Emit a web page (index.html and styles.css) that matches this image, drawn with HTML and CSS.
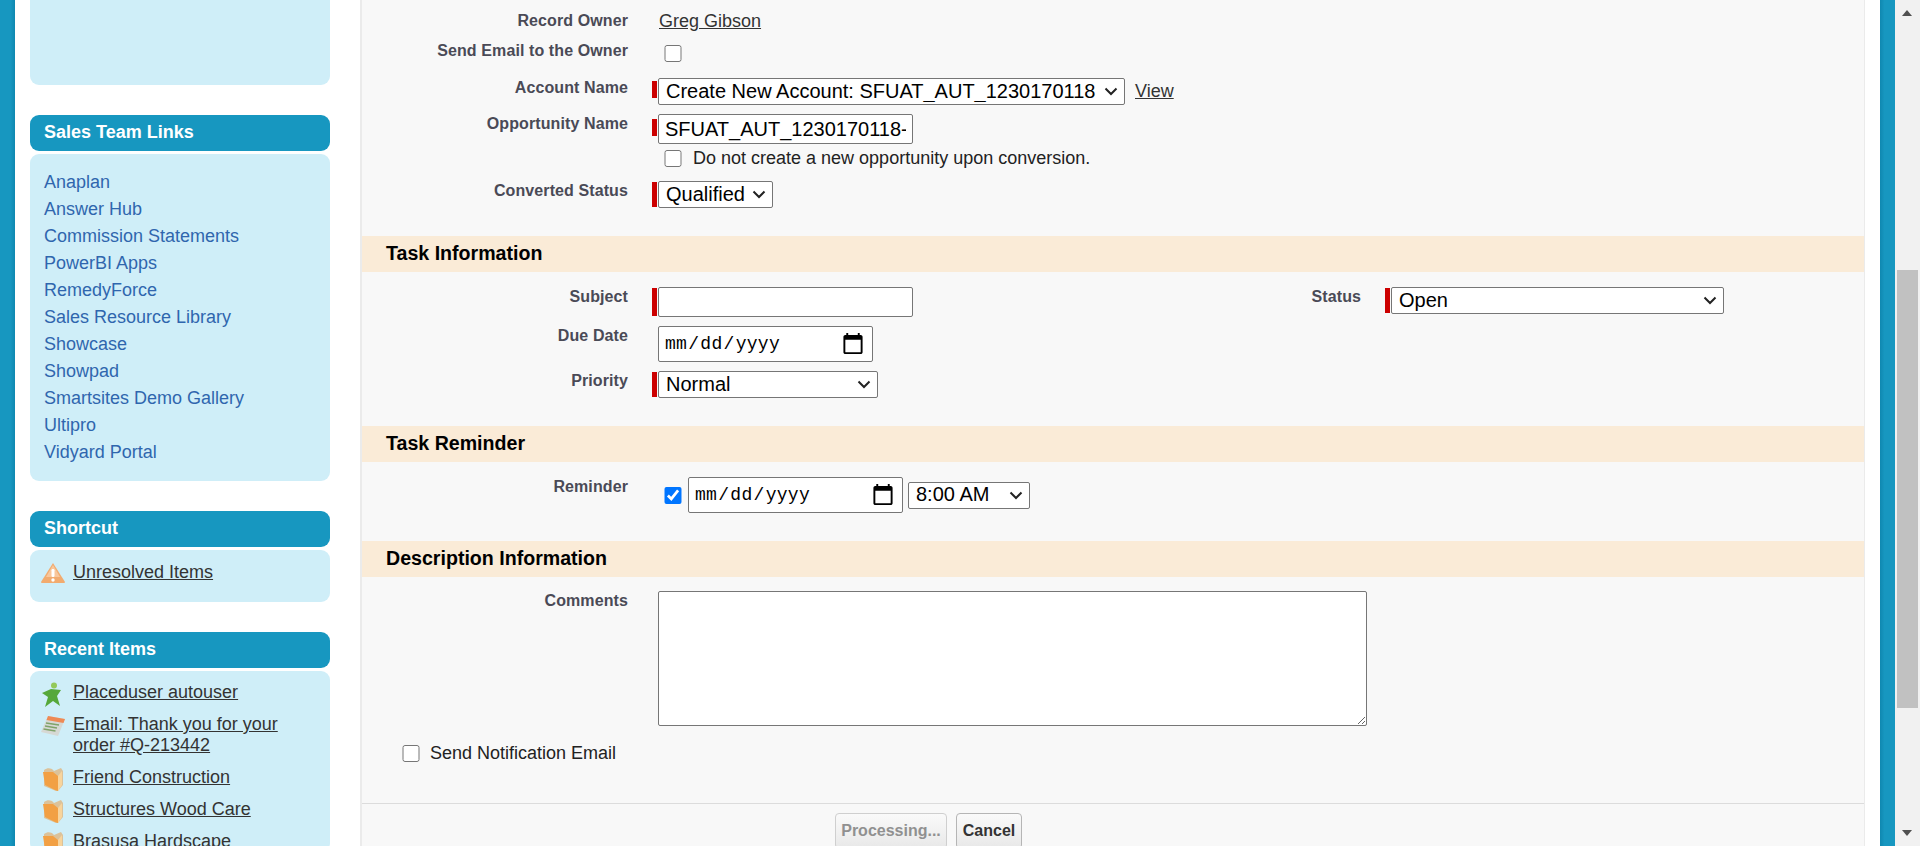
FILE: index.html
```html
<!DOCTYPE html>
<html lang="en">
<head>
    <meta charset="UTF-8">
    <title>Convert Lead</title>
    <link rel="stylesheet" href="styles.css">
</head>
<body>
    <svg class="defs" width="0" height="0">
        <symbol id="folder" viewBox="0 0 22 24">
            <path d="M2 3c3-2 5-2 8-1l2 2 7-3 2 3v14l-5 6-2 0-12-5z" fill="#dcc29a"/>
            <path d="M1 5l10 0 5 4v15l-3-1-10-5z" fill="#f2a044"/>
            <path d="M16 9l4-5v14l-4 6z" fill="#f8d49c"/>
        </symbol>
    </svg>
    <div class="strip strip-left"></div>
    <div class="page">
        <aside class="sidebar">
            <div class="box-body box-clipped"></div>

            <div class="box">
                <div class="box-head">Sales Team Links</div>
                <ul class="box-body team-links">
                    <li><a href="#">Anaplan</a></li>
                    <li><a href="#">Answer Hub</a></li>
                    <li><a href="#">Commission Statements</a></li>
                    <li><a href="#">PowerBI Apps</a></li>
                    <li><a href="#">RemedyForce</a></li>
                    <li><a href="#">Sales Resource Library</a></li>
                    <li><a href="#">Showcase</a></li>
                    <li><a href="#">Showpad</a></li>
                    <li><a href="#">Smartsites Demo Gallery</a></li>
                    <li><a href="#">Ultipro</a></li>
                    <li><a href="#">Vidyard Portal</a></li>
                </ul>
            </div>

            <div class="box">
                <div class="box-head">Shortcut</div>
                <div class="box-body shortcut">
                    <div class="icon-item">
                        <svg class="item-icon" width="26" height="22" viewBox="0 0 26 22">
                            <path d="M13 1L25 20a1 1 0 0 1-1 1H2a1 1 0 0 1-1-1z" fill="#f2ab6f"/>
                            <path d="M13 3L20 15H6z" fill="#f8c79c"/>
                            <rect x="11.5" y="7" width="3" height="8" rx="1.2" fill="#fff"/>
                            <circle cx="13" cy="18" r="1.7" fill="#fff"/>
                        </svg>
                        <a href="#">Unresolved Items</a>
                    </div>
                </div>
            </div>

            <div class="box">
                <div class="box-head">Recent Items</div>
                <div class="box-body recent">
                    <div class="icon-item">
                        <svg class="item-icon" width="26" height="26" viewBox="0 0 26 26">
                            <circle cx="14" cy="3.500" r="3" fill="#93c95a"/>
                            <path d="M2 11l9-4 10 1-4 6 3 10-7-5-8 6 3-10z" fill="#56a83a"/>
                        </svg>
                        <a href="#">Placeduser autouser</a>
                    </div>
                    <div class="icon-item">
                        <svg class="item-icon" width="26" height="24" viewBox="0 0 26 24">
                            <path d="M8 2l17 3-7 17-17-4z" fill="#d6d8d4"/>
                            <path d="M8 2l17 3-1.500 4-17-3z" fill="#ee8a55"/>
                            <path d="M6 9l13 2M5 12l12 2M3.500 15l12 2" stroke="#7fa36a" stroke-width="1.500"/>
                        </svg>
                        <a href="#">Email: Thank you for your order #Q-213442</a>
                    </div>
                    <div class="icon-item">
                        <svg class="item-icon" width="26" height="24"><use href="#folder"/></svg>
                        <a href="#">Friend Construction</a>
                    </div>
                    <div class="icon-item">
                        <svg class="item-icon" width="26" height="24"><use href="#folder"/></svg>
                        <a href="#">Structures Wood Care</a>
                    </div>
                    <div class="icon-item">
                        <svg class="item-icon" width="26" height="24"><use href="#folder"/></svg>
                        <a href="#">Brasusa Hardscape</a>
                    </div>
                </div>
            </div>
        </aside>

        <main class="panel">
            <section class="rows rows-convert">
                <div class="row row-owner">
                    <label class="label">Record Owner</label>
                    <div class="field"><a href="#" class="owner-link">Greg Gibson</a></div>
                </div>
                <div class="row row-email">
                    <label class="label">Send Email to the Owner</label>
                    <div class="field"><input type="checkbox" class="check check-down"></div>
                </div>
                <div class="row row-account">
                    <label class="label">Account Name</label>
                    <div class="field required req-short-3">
                        <select class="select select-account"><option>Create New Account: SFUAT_AUT_1230170118</option></select>
                        <a href="#" class="view-link">View</a>
                    </div>
                </div>
                <div class="row row-opp">
                    <label class="label">Opportunity Name</label>
                    <div class="field-stack">
                        <div class="field required req-short-5">
                            <input type="text" class="text" value="SFUAT_AUT_1230170118-">
                        </div>
                        <div class="field check-line">
                            <input type="checkbox" class="check">
                            <span>Do not create a new opportunity upon conversion.</span>
                        </div>
                    </div>
                </div>
                <div class="row">
                    <label class="label">Converted Status</label>
                    <div class="field required">
                        <select class="select select-status"><option>Qualified</option></select>
                    </div>
                </div>
            </section>

            <h3 class="section-bar">Task Information</h3>
            <section class="rows rows-task">
                <div class="row row-subject">
                    <label class="label">Subject</label>
                    <div class="field required field-half"><input type="text" class="text"></div>
                    <label class="label label-right">Status</label>
                    <div class="field required">
                        <select class="select select-open"><option>Open</option></select>
                    </div>
                </div>
                <div class="row row-due">
                    <label class="label">Due Date</label>
                    <div class="field"><input type="date" class="date"></div>
                </div>
                <div class="row">
                    <label class="label">Priority</label>
                    <div class="field required">
                        <select class="select select-priority"><option>Normal</option></select>
                    </div>
                </div>
            </section>

            <h3 class="section-bar">Task Reminder</h3>
            <section class="rows rows-reminder">
                <div class="row">
                    <label class="label">Reminder</label>
                    <div class="field reminder-field">
                        <input type="checkbox" class="check" checked>
                        <input type="date" class="date">
                        <select class="select select-time"><option>8:00 AM</option></select>
                    </div>
                </div>
            </section>

            <h3 class="section-bar">Description Information</h3>
            <section class="rows rows-desc">
                <div class="row">
                    <label class="label">Comments</label>
                    <div class="field"><textarea class="comments"></textarea></div>
                </div>
                <div class="notify">
                    <input type="checkbox" class="check">
                    <span>Send Notification Email</span>
                </div>
            </section>

            <footer class="buttons">
                <button class="btn btn-processing" disabled>Processing...</button>
                <button class="btn btn-cancel">Cancel</button>
            </footer>
        </main>
    </div>
    <div class="strip strip-right"></div>
    <div class="scrollbar">
        <span class="arrow arrow-up"></span>
        <span class="thumb"></span>
        <span class="arrow arrow-down"></span>
    </div>
</body>
</html>
```

FILE: styles.css
```css
html, body {
    height: 846px;
    margin: 0;
    overflow: hidden;
}
body {
    display: flex;
    background: #fff;
    font-family: "Liberation Sans", Arial, sans-serif;
    font-size: 18px;
    color: #000;
}
.defs {
    position: absolute;
}
.strip {
    width: 15px;
    flex: none;
    background: #1797c0;
}
.strip-left {
    background: linear-gradient(to right, #1797c0 70%, #0f88b0);
}
.strip-right {
    background: linear-gradient(to right, #0f88b0, #1797c0 30%);
}
.page {
    flex: 1;
    display: flex;
    min-width: 0;
    height: 846px;
    overflow: hidden;
    padding: 0 15px;
}

/* sidebar */
.sidebar {
    width: 300px;
    flex: none;
    margin-right: 30px;
}
.box {
    margin-top: 30px;
}
.box-head {
    height: 36px;
    line-height: 35px;
    padding-left: 14px;
    background: #1797c0;
    border-radius: 9px;
    color: #fff;
    font-weight: bold;
    font-size: 18px;
}
.box-body {
    margin: 3px 0 0;
    background: #cfeef8;
    border-radius: 9px;
}
.box-clipped {
    height: 85px;
    margin: 0;
    border-radius: 0 0 9px 9px;
}
.team-links {
    list-style: none;
    height: 327px;
    box-sizing: border-box;
    padding: 15px 0 0 14px;
}
.team-links li {
    height: 27px;
    line-height: 27px;
}
.team-links a {
    color: #2f66ae;
    text-decoration: none;
}
.shortcut {
    height: 52px;
    box-sizing: border-box;
    padding-top: 12px;
}
.recent {
    padding-top: 11px;
}
.icon-item {
    display: flex;
    align-items: flex-start;
    padding-left: 10px;
    margin-bottom: 11px;
    line-height: 21px;
}
.item-icon {
    flex: none;
    width: 26px;
    margin-right: 7px;
    margin-bottom: -6px;
    filter: blur(0.4px);
}
.icon-item a {
    color: #333;
    width: 215px;
}

/* main panel */
.panel {
    flex: 1;
    min-width: 0;
    box-sizing: border-box;
    background: #f8f8f8;
    border-left: 2px solid #ebebeb;
    border-right: 1px solid #ebebeb;
}
.rows-convert {
    padding-top: 11px;
    height: 236px;
    box-sizing: border-box;
}
.rows-task {
    padding-top: 15px;
    height: 154px;
    box-sizing: border-box;
}
.rows-reminder {
    padding-top: 15px;
    height: 79px;
    box-sizing: border-box;
}
.rows-desc {
    padding-top: 14px;
    height: 227px;
    box-sizing: border-box;
    border-bottom: 1px solid #dcdcdc;
}
.row {
    display: flex;
    align-items: flex-start;
}
.row-owner { height: 30px; }
.row-email { height: 37px; }
.row-account { height: 36px; }
.row-opp { height: 67px; }
.row-subject { height: 39px; }
.row-due { height: 45px; }
.label {
    width: 266px;
    flex: none;
    margin-right: 24px;
    text-align: right;
    font-weight: bold;
    font-size: 16px;
    letter-spacing: 0.1px;
    line-height: 20px;
    color: #4a4a56;
}
.label-right {
    width: 109px;
}
.field {
    display: flex;
    align-items: center;
    padding-left: 6px;
}
.field-half {
    width: 600px;
    box-sizing: border-box;
}
.required {
    position: relative;
}
.required::before {
    content: "";
    position: absolute;
    left: 0;
    top: 1px;
    bottom: 1px;
    width: 5px;
    background: #c00;
}
.req-short-3::before {
    top: 3px;
    bottom: auto;
    height: 17px;
}
.req-short-5::before {
    top: 5px;
    bottom: auto;
    height: 17px;
}
.owner-link,
.view-link {
    color: #333;
    font-size: 18px;
}
.owner-link {
    line-height: 20px;
    margin-left: 1px;
}
.view-link {
    margin-left: 10px;
}
.check {
    width: 18px;
    height: 17px;
    margin: 0 0 0 6px;
    flex: none;
}
.check-down {
    margin-top: 4px;
}
.select,
.text,
.date,
.comments {
    box-sizing: border-box;
    margin: 0;
    background: #fff;
    border: 1px solid #767676;
    border-radius: 2px;
    font-family: "Liberation Sans", Arial, sans-serif;
    font-size: 20px;
    color: #000;
}
.select {
    appearance: none;
    height: 27px;
    padding: 0 0 2px 7px;
    background: #fff url("data:image/svg+xml,%3Csvg xmlns='http://www.w3.org/2000/svg' width='14' height='9'%3E%3Cpath d='M1.500 1.500L7 7l5.500-5.500' fill='none' stroke='%23222' stroke-width='2'/%3E%3C/svg%3E") no-repeat right 6px center;
}
.select-account { width: 467px; }
.select-status { width: 115px; }
.select-open { width: 333px; }
.select-priority { width: 220px; }
.select-time {
    width: 122px;
    margin-left: 5px;
}
.text {
    width: 255px;
    height: 30px;
    padding: 0 6px;
}
.date {
    width: 215px;
    height: 36px;
    padding: 0 5px;
    font-family: "Liberation Mono", monospace;
    font-size: 18px;
    letter-spacing: 0.3px;
}
.date::-webkit-calendar-picker-indicator {
    width: 24px;
    height: 24px;
    padding: 0;
    margin: 0 2px 0 0;
}
.comments {
    display: block;
    width: 709px;
    height: 135px;
}
.check-line {
    margin-top: 5px;
    height: 18px;
    font-size: 18px;
    color: #222;
}
.check-line span {
    margin-left: 11px;
}
.reminder-field .check {
    margin-right: 6px;
}
.notify {
    display: flex;
    align-items: center;
    margin: 18px 0 0 40px;
    height: 18px;
    color: #222;
}
.notify .check {
    margin-left: 0;
}
.notify span {
    margin-left: 10px;
}
.section-bar {
    margin: 0;
    height: 36px;
    line-height: 35px;
    padding-left: 24px;
    background: #faebd7;
    font-size: 19.6px;
    font-weight: bold;
}
.buttons {
    display: flex;
    gap: 9px;
    padding: 9px 0 0 473px;
}
.btn {
    height: 36px;
    padding: 0;
    border: 1px solid #b5b5b5;
    border-radius: 4px;
    background: linear-gradient(#fafafa, #e8e8e8);
    font-family: "Liberation Sans", Arial, sans-serif;
    font-size: 16px;
    font-weight: bold;
    color: #333;
}
.btn-processing { width: 112px; }
.btn-cancel { width: 66px; }
.btn:disabled {
    color: #909090;
    border-color: #cfcfcf;
}

/* drawn scrollbar, the page is shown scrolled */
.scrollbar {
    position: relative;
    width: 25px;
    flex: none;
    background: #f1f1f1;
}
.thumb {
    position: absolute;
    left: 2px;
    right: 2px;
    top: 270px;
    height: 438px;
    background: #c1c1c1;
}
.arrow {
    position: absolute;
    left: 7px;
    width: 0;
    height: 0;
    border-left: 5.5px solid transparent;
    border-right: 5.5px solid transparent;
}
.arrow-up {
    top: 10px;
    border-bottom: 6px solid #505050;
}
.arrow-down {
    bottom: 10px;
    border-top: 6px solid #505050;
}
```
